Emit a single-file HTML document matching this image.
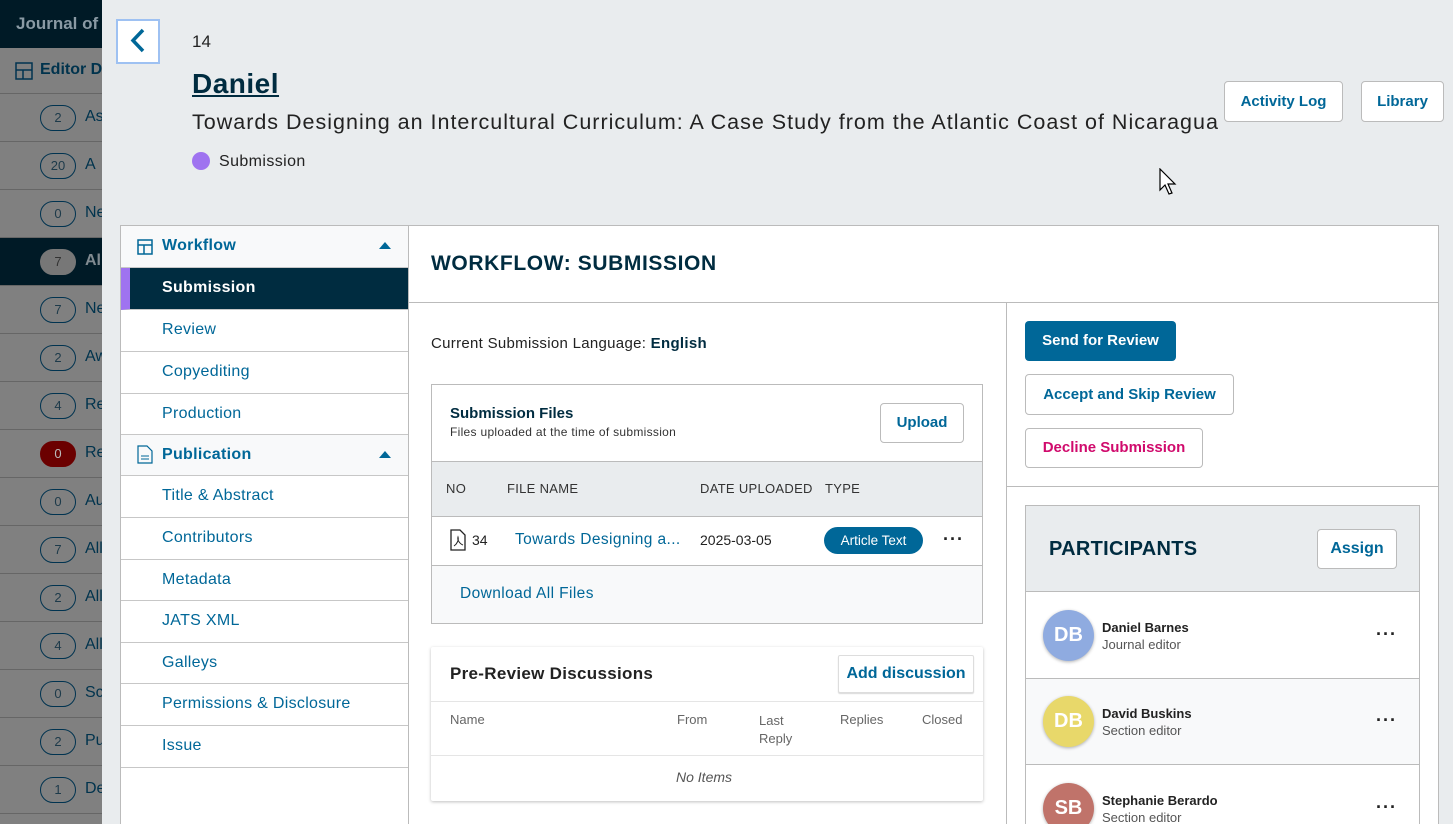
<!DOCTYPE html>
<html><head><meta charset="utf-8"><style>
*{box-sizing:border-box;margin:0;padding:0}
html,body{width:1453px;height:824px;overflow:hidden}
body{font-family:"Liberation Sans","DejaVu Sans",sans-serif;background:#e9ecee;position:relative;color:#222}
.abs{position:absolute}
.side{left:0;top:0;width:102px;height:824px;background:#808080;overflow:hidden}
.side .top{position:absolute;left:0;top:0;width:102px;height:48px;background:#001a26;color:#8a9aa4;font-weight:bold;font-size:17px;padding:14px 0 0 16px;white-space:nowrap}
.srow{position:absolute;left:0;width:102px;height:48px;border-bottom:1px solid #666;white-space:nowrap;color:#00334d;font-size:15px}
.srow .b{position:absolute;left:40px;top:11px;width:36px;height:26px;border:1px solid #003350;border-radius:13px;text-align:center;font-size:13px;line-height:24px;color:#1d3a4a}
.srow .t{position:absolute;left:85px;top:14px;font-size:16px}
.back{left:116px;top:19px;width:44px;height:45px;border:2px solid #9ec1f2;background:#fff}
.btn{position:absolute;background:#fff;border:1px solid #bbb;border-radius:4px;color:#006798;font-weight:bold;font-size:15px;text-align:center}
.nav{left:120px;top:225px;width:289px;height:599px;background:#fff;border:1px solid #bbb;border-bottom:0}
.ni{position:absolute;left:0;width:287px;border-bottom:1px solid #c7c7c7;color:#006798;font-size:16px;padding:11px 0 0 41px;background:#fff;letter-spacing:.3px}
.nh{background:#f8f9fa;font-weight:bold;font-size:16px}
.card{left:408px;top:225px;width:1031px;height:599px;background:#fff;border:1px solid #bbb;border-bottom:0}
.hdr{font-size:13px;color:#333;letter-spacing:.3px}
.dots{position:absolute;font-size:18px;letter-spacing:1px;color:#222;font-weight:bold}
.av{position:absolute;left:1043px;width:51px;height:51px;border-radius:50%;color:#fff;font-weight:bold;font-size:20px;text-align:center;line-height:51px;box-shadow:0 1px 3px rgba(0,0,0,.3)}
.pn{position:absolute;left:1102px;font-size:13px;font-weight:bold;color:#222}
.pr{position:absolute;left:1102px;font-size:13px;color:#555}
</style></head><body>
<div class="abs side">
<div class="top">Journal of</div>
<div class="srow" style="top:48px;height:46px;"><svg style="position:absolute;left:15px;top:14px" width="18" height="18"><rect x="1" y="1" width="16" height="16" fill="none" stroke="#003350" stroke-width="1.5"/><path d="M1 8H17M8 8V17" stroke="#003350" stroke-width="1.5"/></svg><span style="position:absolute;left:40px;top:13px;font-weight:bold;color:#00334d;font-size:16px">Editor D</span></div>
<div class="srow" style="top:94px"><span class="b">2</span><span class="t">As</span></div>
<div class="srow" style="top:142px"><span class="b">20</span><span class="t">A</span></div>
<div class="srow" style="top:190px"><span class="b">0</span><span class="t">Ne</span></div>
<div class="srow" style="top:238px;background:#001a26;color:#aaa"><span class="b" style="background:#777;border-color:#777;color:#333">7</span><span class="t" style="color:#808a90;font-weight:bold">All</span></div>
<div class="srow" style="top:286px"><span class="b">7</span><span class="t">Ne</span></div>
<div class="srow" style="top:334px"><span class="b">2</span><span class="t">Aw</span></div>
<div class="srow" style="top:382px"><span class="b">4</span><span class="t">Re</span></div>
<div class="srow" style="top:430px"><span class="b" style="background:#6b0000;border-color:#6b0000;color:#bbb">0</span><span class="t">Re</span></div>
<div class="srow" style="top:478px"><span class="b">0</span><span class="t">Au</span></div>
<div class="srow" style="top:526px"><span class="b">7</span><span class="t">All</span></div>
<div class="srow" style="top:574px"><span class="b">2</span><span class="t">All</span></div>
<div class="srow" style="top:622px"><span class="b">4</span><span class="t">All</span></div>
<div class="srow" style="top:670px"><span class="b">0</span><span class="t">Sc</span></div>
<div class="srow" style="top:718px"><span class="b">2</span><span class="t">Pu</span></div>
<div class="srow" style="top:766px"><span class="b">1</span><span class="t">De</span></div>
</div>
<div class="abs back"><svg width="40" height="41" viewBox="0 0 40 41"><path d="M25 9 L15 19.5 L25 30" stroke="#006798" stroke-width="3.5" fill="none"/></svg></div>
<div class="abs" style="left:192px;top:32px;font-size:17px;color:#222">14</div>
<div class="abs" style="left:192px;top:68px;font-size:28px;font-weight:bold;color:#002c40;text-decoration:underline;letter-spacing:.5px">Daniel</div>
<div class="abs" style="left:192px;top:110px;font-size:21.5px;color:#222;white-space:nowrap;letter-spacing:1px">Towards Designing an Intercultural Curriculum: A Case Study from the Atlantic Coast of Nicaragua</div>
<div class="abs" style="left:192px;top:152px;width:18px;height:18px;border-radius:50%;background:#9f73f0"></div>
<div class="abs" style="left:219px;top:153px;font-size:16px;color:#222;letter-spacing:.4px">Submission</div>
<div class="btn" style="left:1224px;top:81px;width:119px;height:41px;line-height:39px">Activity Log</div>
<div class="btn" style="left:1361px;top:81px;width:83px;height:41px;line-height:39px">Library</div>
<svg class="abs" style="left:1159px;top:168px" width="20" height="28" viewBox="0 0 20 28"><path d="M1 1 L1 22 L6 17 L10 26 L13 25 L9 16 L16 16 Z" fill="#fff" stroke="#000" stroke-width="1.2"/></svg>

<div class="abs nav">
<div class="ni nh" style="top:0;height:42px"><svg style="position:absolute;left:16px;top:13px" width="16" height="16"><rect x="1" y="1" width="14" height="14" fill="none" stroke="#006798" stroke-width="1.5"/><path d="M1 6H15M7 6V15" stroke="#006798" stroke-width="1.5"/></svg>Workflow<span style="position:absolute;right:17px;top:16px;border:6px solid transparent;border-bottom:7px solid #006798;border-top:0"></span></div>
<div class="ni" style="top:42px;height:42px;background:#002c40;color:#fff;font-weight:bold;border-left:9px solid #9f73f0;padding-left:32px">Submission</div>
<div class="ni" style="top:84px;height:42px">Review</div>
<div class="ni" style="top:126px;height:42px">Copyediting</div>
<div class="ni" style="top:168px;height:41px">Production</div>
<div class="ni nh" style="top:209px;height:41px"><svg style="position:absolute;left:16px;top:10px" width="16" height="19"><path d="M1 1H10L15 6V18H1Z" fill="none" stroke="#006798" stroke-width="1.2"/><path d="M4 11H12M4 14H12" stroke="#006798"/></svg>Publication<span style="position:absolute;right:17px;top:16px;border:6px solid transparent;border-bottom:7px solid #006798;border-top:0"></span></div>
<div class="ni" style="top:250px;height:42px">Title &amp; Abstract</div>
<div class="ni" style="top:292px;height:42px">Contributors</div>
<div class="ni" style="top:334px;height:41px">Metadata</div>
<div class="ni" style="top:375px;height:42px">JATS XML</div>
<div class="ni" style="top:417px;height:41px">Galleys</div>
<div class="ni" style="top:458px;height:42px">Permissions &amp; Disclosure</div>
<div class="ni" style="top:500px;height:42px">Issue</div>
</div>

<div class="abs card"></div>
<div class="abs" style="left:431px;top:252px;font-size:21px;font-weight:bold;color:#002c40;letter-spacing:.6px">WORKFLOW: SUBMISSION</div>
<div class="abs" style="left:409px;top:302px;width:1029px;height:1px;background:#bbb"></div>
<div class="abs" style="left:1006px;top:302px;width:1px;height:522px;background:#bbb"></div>
<div class="abs" style="left:431px;top:335px;font-size:15px;color:#222;letter-spacing:.3px">Current Submission Language: <b style="color:#002c40">English</b></div>

<div class="abs" style="left:431px;top:384px;width:552px;height:240px;border:1px solid #bbb;background:#fff"></div>
<div class="abs" style="left:450px;top:405px;font-size:15px;font-weight:bold;color:#002c40">Submission Files</div>
<div class="abs" style="left:450px;top:425px;font-size:12px;color:#333;letter-spacing:.3px">Files uploaded at the time of submission</div>
<div class="btn" style="left:880px;top:403px;width:84px;height:40px;line-height:38px">Upload</div>
<div class="abs" style="left:432px;top:461px;width:550px;height:56px;background:#e9ecee;border-top:1px solid #bbb;border-bottom:1px solid #bbb"></div>
<div class="abs hdr" style="left:446px;top:481px">NO</div>
<div class="abs hdr" style="left:507px;top:481px">FILE NAME</div>
<div class="abs hdr" style="left:700px;top:481px">DATE UPLOADED</div>
<div class="abs hdr" style="left:825px;top:481px">TYPE</div>
<svg class="abs" style="left:448px;top:529px" width="20" height="23"><path d="M3 1H12L17 6V21H3Z" fill="none" stroke="#222" stroke-width="1.3"/><path d="M6 17C9 15 11 11 10 8C9 11 12 15 15 16" fill="none" stroke="#222" stroke-width="1"/></svg>
<div class="abs" style="left:472px;top:532px;font-size:14px;color:#222">34</div>
<div class="abs" style="left:515px;top:531px;font-size:15.5px;color:#006798;letter-spacing:.4px">Towards Designing a...</div>
<div class="abs" style="left:700px;top:532px;font-size:14px;color:#222">2025-03-05</div>
<div class="abs" style="left:824px;top:527px;width:99px;height:27px;border-radius:14px;background:#006798;color:#fff;font-size:13.5px;text-align:center;line-height:27px">Article Text</div>
<div class="dots" style="left:943px;top:529px">···</div>
<div class="abs" style="left:432px;top:565px;width:550px;height:58px;background:#f8f9fa;border-top:1px solid #bbb"></div>
<div class="abs" style="left:460px;top:585px;font-size:15.5px;color:#006798;letter-spacing:.4px">Download All Files</div>

<div class="abs" style="left:431px;top:647px;width:552px;height:154px;background:#fff;box-shadow:0 1px 3px rgba(0,0,0,.25);border-radius:2px"></div>
<div class="abs" style="left:450px;top:664px;font-size:17px;font-weight:bold;color:#222;letter-spacing:.3px">Pre-Review Discussions</div>
<div class="btn" style="left:838px;top:655px;width:136px;height:38px;line-height:36px;border-radius:2px;font-size:16px;box-shadow:0 1px 1px rgba(0,0,0,.15);border-color:#ddd">Add discussion</div>
<div class="abs" style="left:431px;top:701px;width:552px;height:1px;background:#e5e5e5"></div>
<div class="abs" style="left:450px;top:712px;font-size:13px;color:#666">Name</div>
<div class="abs" style="left:677px;top:712px;font-size:13px;color:#666">From</div>
<div class="abs" style="left:759px;top:712px;font-size:13px;color:#666;line-height:18px">Last<br>Reply</div>
<div class="abs" style="left:840px;top:712px;font-size:13px;color:#666">Replies</div>
<div class="abs" style="left:922px;top:712px;font-size:13px;color:#666">Closed</div>
<div class="abs" style="left:431px;top:755px;width:552px;height:1px;background:#e5e5e5"></div>
<div class="abs" style="left:676px;top:769px;font-size:14px;color:#555;font-style:italic">No Items</div>

<div class="abs" style="left:1025px;top:321px;width:151px;height:40px;background:#006798;border-radius:4px;color:#fff;font-weight:bold;font-size:15px;text-align:center;line-height:40px">Send for Review</div>
<div class="btn" style="left:1025px;top:374px;width:209px;height:41px;line-height:39px">Accept and Skip Review</div>
<div class="btn" style="left:1025px;top:428px;width:178px;height:40px;line-height:38px;color:#d00a6c">Decline Submission</div>
<div class="abs" style="left:1007px;top:486px;width:431px;height:1px;background:#bbb"></div>

<div class="abs" style="left:1025px;top:505px;width:395px;height:320px;border:1px solid #bbb;background:#fff"></div>
<div class="abs" style="left:1026px;top:506px;width:393px;height:86px;background:#e9ecee;border-bottom:1px solid #bbb"></div>
<div class="abs" style="left:1049px;top:538px;font-size:20px;font-weight:bold;color:#002c40;letter-spacing:.3px">PARTICIPANTS</div>
<div class="btn" style="left:1317px;top:529px;width:80px;height:40px;line-height:38px;font-size:16px">Assign</div>
<div class="abs" style="left:1026px;top:678px;width:393px;height:87px;background:#f8f9fa;border-top:1px solid #bbb;border-bottom:1px solid #bbb"></div>
<div class="av" style="top:610px;background:#8fabe0">DB</div>
<div class="pn" style="top:620px">Daniel Barnes</div><div class="pr" style="top:637px">Journal editor</div>
<div class="dots" style="left:1376px;top:624px">···</div>
<div class="av" style="top:696px;background:#e8d86a">DB</div>
<div class="pn" style="top:706px">David Buskins</div><div class="pr" style="top:723px">Section editor</div>
<div class="dots" style="left:1376px;top:710px">···</div>
<div class="av" style="top:783px;background:#c0736a">SB</div>
<div class="pn" style="top:793px">Stephanie Berardo</div><div class="pr" style="top:810px">Section editor</div>
<div class="dots" style="left:1376px;top:797px">···</div>
</body></html>
